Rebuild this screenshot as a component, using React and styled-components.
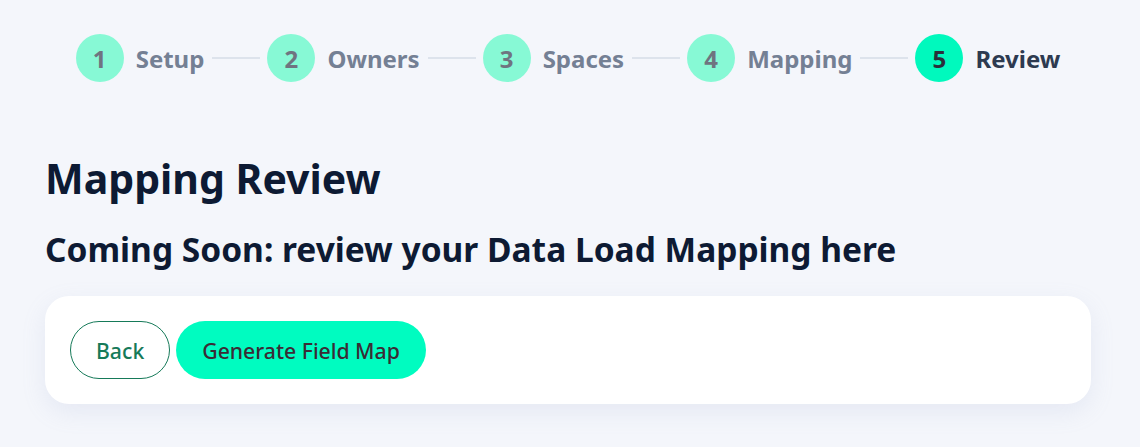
import React from "react";
import styled, { createGlobalStyle } from "styled-components";

const Global = createGlobalStyle`
  html, body { margin: 0; padding: 0; background: #f4f6fb; }
  body { font-family: "Noto Sans", "Open Sans", sans-serif; }
  * { box-sizing: border-box; }
`;

const Page = styled.div`
  min-height: 447px;
  background: #f4f6fb;
  padding: 34px 49px 40px 45px;
`;

const Stepper = styled.div`
  display: flex;
  align-items: center;
  justify-content: center;
`;

const Step = styled.div`
  display: flex;
  align-items: center;
  gap: 12px;
`;

const Circle = styled.div`
  width: 48px;
  height: 48px;
  flex-shrink: 0;
  border-radius: 50%;
  display: flex;
  align-items: center;
  justify-content: center;
  background: ${(p) => (p.$active ? "#00f9bd" : "#87f9d5")};
  color: ${(p) => (p.$active ? "#2a2f3a" : "#6f7480")};
  font-size: 24px;
  font-weight: 700;
`;

const Label = styled.span`
  font-size: 24px;
  font-weight: 700;
  color: ${(p) => (p.$active ? "#2d3a50" : "#748094")};
`;

const Connector = styled.div`
  width: 48px;
  height: 2px;
  background: #dde3ec;
  margin: 0 7px 0 8px;
`;

const Title = styled.h1`
  margin: 69px 0 0;
  font-size: 41px;
  line-height: 54px;
  font-weight: 700;
  color: #0d1a33;
`;

const Subtitle = styled.h2`
  margin: 22px 0 0;
  font-size: 33.5px;
  line-height: 44px;
  font-weight: 700;
  color: #0d1a33;
`;

const Card = styled.div`
  margin-top: 25px;
  background: #ffffff;
  border-radius: 24px;
  padding: 25px 25px;
  display: flex;
  gap: 6px;
  box-shadow: 0 8px 24px rgba(140, 155, 200, 0.14);
`;

const Button = styled.button`
  height: 58px;
  border-radius: 29px;
  font-family: "Noto Sans", "Open Sans", sans-serif;
  font-size: 21.2px;
  font-weight: 500;
  cursor: pointer;
  padding: 0 ${(p) => (p.$primary ? "26px" : "25px")};
  border: ${(p) => (p.$primary ? "none" : "1.5px solid #167a59")};
  background: ${(p) => (p.$primary ? "#00fcc0" : "#ffffff")};
  color: ${(p) => (p.$primary ? "#3a2c35" : "#167a59")};
`;

const steps = ["Setup", "Owners", "Spaces", "Mapping", "Review"];

export default function App() {
  return (
    <Page>
      <Global />
      <Stepper>
        {steps.map((s, i) => (
          <React.Fragment key={s}>
            {i > 0 && <Connector />}
            <Step>
              <Circle $active={i === 4}>{i + 1}</Circle>
              <Label $active={i === 4}>{s}</Label>
            </Step>
          </React.Fragment>
        ))}
      </Stepper>
      <Title>Mapping Review</Title>
      <Subtitle>Coming Soon: review your Data Load Mapping here</Subtitle>
      <Card>
        <Button>Back</Button>
        <Button $primary>Generate Field Map</Button>
      </Card>
    </Page>
  );
}
